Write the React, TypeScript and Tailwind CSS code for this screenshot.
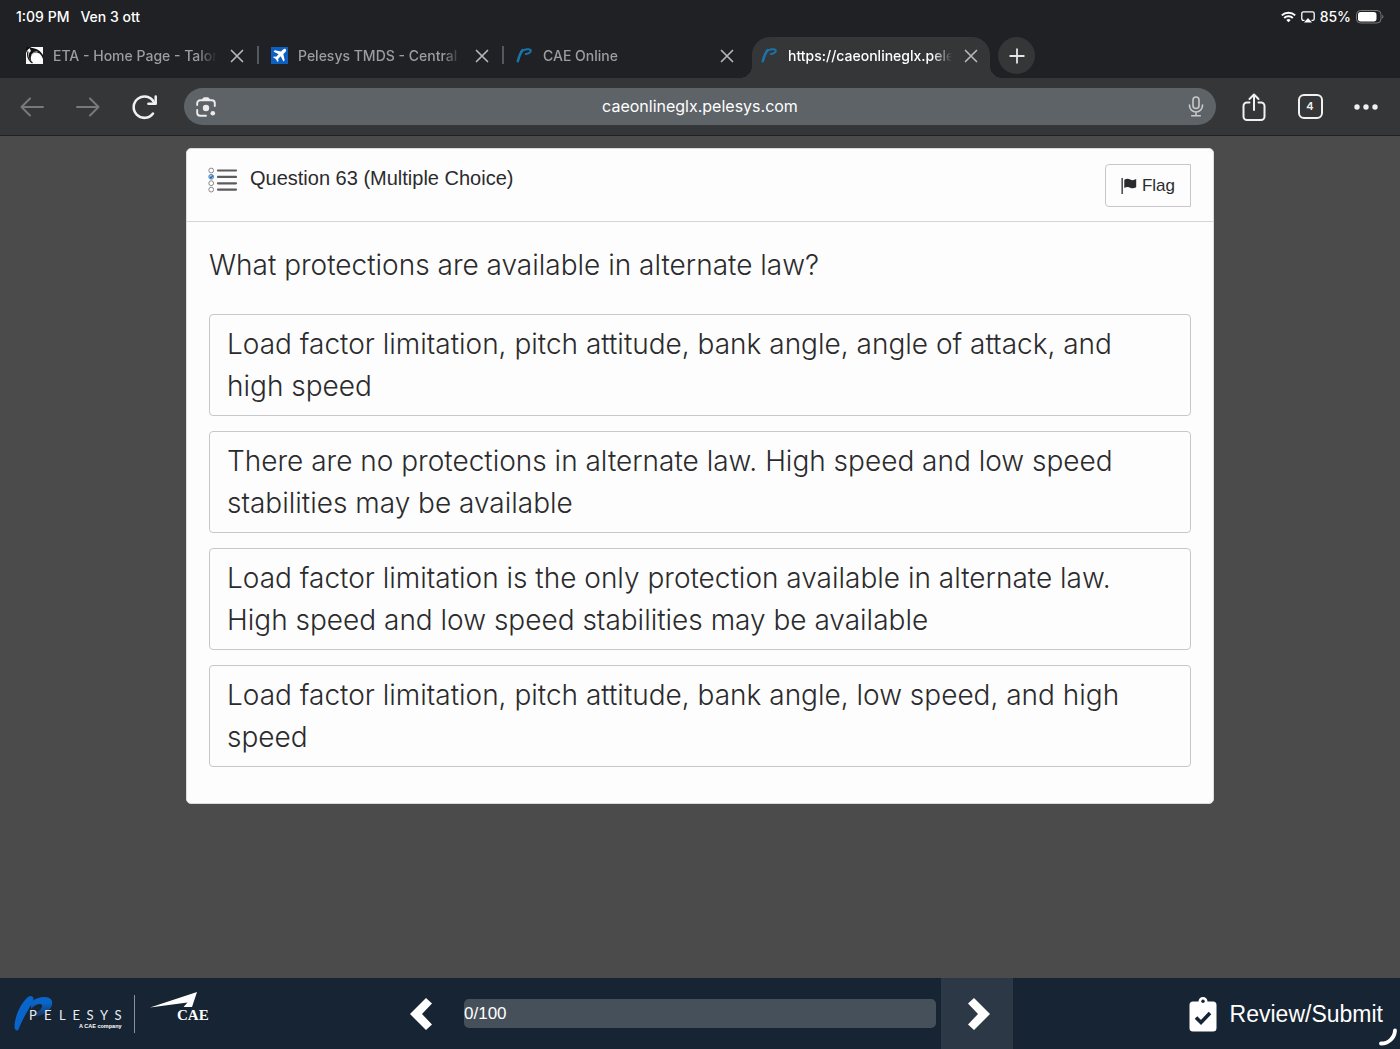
import React from "react";

const answers = [
  "Load factor limitation, pitch attitude, bank angle, angle of attack, and high speed",
  "There are no protections in alternate law. High speed and low speed stabilities may be available",
  "Load factor limitation is the only protection available in alternate law. High speed and low speed stabilities may be available",
  "Load factor limitation, pitch attitude, bank angle, low speed, and high speed",
];

function TalonIcon() {
  return (
    <svg width="17" height="17" viewBox="0 0 17 17" fill="none" aria-hidden="true">
      <rect width="17" height="17" fill="#f7f7f7" />
      <path d="M0 0h6C3 1 1 3 0 6z" fill="#111" />
      <path d="M3.500 1C9 .5 14 3 17 8v4c-1.500-4.500-4-6.500-7-6.500-4 0-6.500 4-4.500 9C2 11 2 6 5 4z" fill="#111" />
      <path d="M2 4.500c-1 4 .5 8.500 4.500 11.500" stroke="#111" strokeWidth="1.200" />
      <path d="M5.500 8C7 5.500 9 4.500 11.500 4.700" stroke="#ddd" strokeWidth=".7" />
      <circle cx="10.400" cy="11.300" r="4" fill="#fff" />
    </svg>
  );
}

function PlaneIcon() {
  return (
    <svg width="17" height="17" viewBox="0 0 17 17" aria-hidden="true">
      <rect width="17" height="17" fill="#0d5fc0" />
      <path
        d="M14.800 2.200c-.8-.8-2-.3-2.700.4L10 4.600 3.800 3.200 2.500 4.500 7.600 7.200 5.100 9.800 2.900 9.400 2 10.300 4.800 12 6.600 15 7.500 14.100 7.100 11.900 9.700 9.300 12.400 14.500 13.700 13.200 12.300 7 14.400 4.900c.7-.7 1.200-1.900.4-2.700z"
        fill="#fff"
      />
    </svg>
  );
}

function PelesysIcon() {
  return (
    <svg width="17" height="17" viewBox="0 0 17 17" fill="none" aria-hidden="true">
      <path d="M6.500 3.200C4.300 6 3 9.500 1.800 14.200" stroke="#1a74aa" strokeWidth="2.600" strokeLinecap="round" />
      <path d="M5 4.800C8 2 14 1.400 14.800 3.200c.5 2-2.300 3.600-5 3.800" stroke="#1a74aa" strokeWidth="2" strokeLinecap="round" />
    </svg>
  );
}

function CloseIcon() {
  return (
    <svg width="14" height="14" viewBox="0 0 14 14" stroke="currentColor" strokeWidth="1.700" strokeLinecap="round" aria-hidden="true">
      <path d="M1.500 1.500l11 11M12.500 1.500l-11 11" />
    </svg>
  );
}

const tabs = [
  { title: "ETA - Home Page - Talon", icon: <TalonIcon />, active: false },
  { title: "Pelesys TMDS - Central", icon: <PlaneIcon />, active: false },
  { title: "CAE Online", icon: <PelesysIcon />, active: false },
  { title: "https://caeonlineglx.pele", icon: <PelesysIcon />, active: true },
];

function Tab({ title, icon, active, divider }: { title: string; icon: React.ReactNode; active: boolean; divider: boolean }) {
  return (
    <div
      className={
        active
          ? "relative mx-1 flex h-[41px] w-[238px] items-start rounded-t-[18px] bg-[#353638] pr-[12px] pl-[9px] text-white"
          : "relative flex h-[41px] w-[245px] items-start pr-[14px] pl-[13px] text-[#9b9da0]"
      }
    >
      {active && (
        <>
          <span className="absolute bottom-0 -left-3 h-3 w-3 bg-[radial-gradient(circle_at_0_0,transparent_12px,#353638_12px)]" />
          <span className="absolute -right-3 bottom-0 h-3 w-3 bg-[radial-gradient(circle_at_100%_0,transparent_12px,#353638_12px)]" />
        </>
      )}
      <button className="flex h-[37px] min-w-0 flex-1 items-center gap-[10px] text-left">
        <span className="shrink-0">{icon}</span>
        <span className="w-[164px] mask-r-from-88% text-[14px] leading-5 font-medium whitespace-nowrap">{title}</span>
      </button>
      <button aria-label={"Close " + title} className="ml-[13px] flex h-[37px] w-[14px] shrink-0 items-center text-[#b4b6b8]">
        <CloseIcon />
      </button>
      {divider && <span className="absolute top-[9px] -right-px h-[18px] w-[2px] bg-[#54595f]" />}
    </div>
  );
}

function ToolButton({ label, children }: { label: string; children: React.ReactNode }) {
  return (
    <button aria-label={label} className="flex h-10 w-[56px] shrink-0 items-center justify-center">
      {children}
    </button>
  );
}

function BrowserChrome() {
  return (
    <header className="font-['Inter',sans-serif]">
      <div className="bg-[#202124]">
        <div className="flex h-[37px] items-start justify-between pt-[7px] pr-[16px] pl-4 text-[14px] leading-5 font-medium text-white">
          <div className="flex gap-[11px]">
            <span>1:09 PM</span>
            <span>Ven 3 ott</span>
          </div>
          <div className="flex items-center gap-[5px]">
            <svg width="15" height="12" viewBox="0 0 15 12" fill="none" stroke="#fff" strokeWidth="2" aria-hidden="true">
              <path d="M.8 4.400a9.500 9.500 0 0 1 13.400 0M3.200 7a6.100 6.100 0 0 1 8.600 0" />
              <path d="M5.300 9a3.200 3.200 0 0 1 4.400 0L7.500 11.300z" fill="#fff" stroke="none" />
            </svg>
            <svg width="14" height="12" viewBox="0 0 14 12" fill="none" aria-hidden="true">
              <path d="M3.500 9.400H2.400A1.600 1.600 0 0 1 .8 7.800V2.400A1.600 1.600 0 0 1 2.400.8h9.200a1.600 1.600 0 0 1 1.600 1.600v5.400a1.600 1.600 0 0 1-1.600 1.600h-1.100" stroke="#fff" strokeWidth="1.300" />
              <path d="M7 7l4 4.600H3z" fill="#fff" />
            </svg>
            <span>85%</span>
            <svg width="28" height="14" viewBox="0 0 28 14" aria-hidden="true">
              <rect x=".5" y=".5" width="24.500" height="12.500" rx="4" fill="none" stroke="#77797b" />
              <rect x="2" y="2" width="18.500" height="9.500" rx="2.700" fill="#fff" />
              <path d="M26.300 4.800c1.500.6 1.500 3.300 0 4z" fill="#77797b" />
            </svg>
          </div>
        </div>
        <nav aria-label="Tabs" className="flex pl-[13px]">
          {tabs.map((tab, i) => (
            <Tab key={i} {...tab} divider={i < 2} />
          ))}
          <button aria-label="New tab" className="ml-1 flex h-[37px] w-[37px] items-center justify-center rounded-full bg-[#353638] text-[#e4e5e6]">
            <svg width="16" height="16" viewBox="0 0 16 16" stroke="currentColor" strokeWidth="1.800" strokeLinecap="round" aria-hidden="true">
              <path d="M8 1.200v13.600M1.200 8h13.600" />
            </svg>
          </button>
        </nav>
      </div>
      <div className="flex h-[58px] items-center border-b border-[#202124] bg-[#353638] pr-[6px] pl-1 text-[#f1f1f1]">
        <ToolButton label="Back">
          <svg width="24" height="20" viewBox="0 0 24 20" fill="none" stroke="#77797b" strokeWidth="2" strokeLinecap="round" strokeLinejoin="round" aria-hidden="true">
            <path d="M23 10H1.500M10 1.500L1.500 10l8.500 8.500" />
          </svg>
        </ToolButton>
        <ToolButton label="Forward">
          <svg width="24" height="20" viewBox="0 0 24 20" fill="none" stroke="#77797b" strokeWidth="2" strokeLinecap="round" strokeLinejoin="round" aria-hidden="true">
            <path d="M1 10h21.500M14 1.500l8.500 8.500-8.500 8.500" />
          </svg>
        </ToolButton>
        <ToolButton label="Reload">
          <svg width="26" height="26" viewBox="0 0 26 26" fill="none" stroke="currentColor" strokeWidth="2.500" strokeLinecap="round" strokeLinejoin="round" aria-hidden="true">
            <path d="M22 19.500A10.700 10.700 0 1 1 23 8.500" />
            <path d="M24.700 2.500v7.300h-7.300" />
          </svg>
        </ToolButton>
        <div className="relative mr-[10px] ml-3 flex h-[37px] min-w-0 flex-1 items-center rounded-full bg-[#5e6367]">
          <button aria-label="Search with camera" className="absolute left-3">
            <svg width="20" height="20" viewBox="0 0 20 20" fill="none" stroke="#ececec" strokeWidth="1.900" strokeLinecap="round" aria-hidden="true">
              <path d="M1.200 8V6.200a3 3 0 0 1 3-3h11.600a3 3 0 0 1 3 3V9M1.200 13v2.800a3 3 0 0 0 3 3H10" />
              <path d="M6.800 2.600L8 1.300h4l1.200 1.300z" fill="#ececec" strokeLinejoin="round" />
              <circle cx="10" cy="11" r="3.200" fill="#ececec" stroke="none" />
              <circle cx="16.800" cy="16.300" r="2.300" fill="#ececec" stroke="none" />
            </svg>
          </button>
          <input
            aria-label="Address"
            defaultValue="caeonlineglx.pelesys.com"
            className="h-full w-full bg-transparent px-12 pb-[2px] text-center text-[16px] text-white outline-none"
          />
          <button aria-label="Voice search" className="absolute right-3">
            <svg width="16" height="21" viewBox="0 0 16 21" fill="none" stroke="#c7c9ca" strokeWidth="1.600" strokeLinecap="round" aria-hidden="true">
              <rect x="5" y="1" width="6" height="11.500" rx="3" />
              <path d="M1.500 9v.5a6.500 6.500 0 0 0 13 0V9M8 16v3.800M3.700 19.800h8.600" />
            </svg>
          </button>
        </div>
        <ToolButton label="Share">
          <svg width="24" height="28" viewBox="0 0 24 28" fill="none" stroke="currentColor" strokeWidth="2" strokeLinecap="round" strokeLinejoin="round" aria-hidden="true">
            <path d="M7.500 9.500H5a3.500 3.500 0 0 0-3.500 3.500v10.500A3.500 3.500 0 0 0 5 27h14a3.500 3.500 0 0 0 3.500-3.500V13A3.500 3.500 0 0 0 19 9.500h-2.500" />
            <path d="M12 17V1.500M7.500 6L12 1.500 16.500 6" />
          </svg>
        </ToolButton>
        <ToolButton label="4 open tabs">
          <span className="flex h-[25px] w-[25px] items-center justify-center rounded-[6px] border-2 border-[#f1f1f1] text-[11px] font-semibold">4</span>
        </ToolButton>
        <ToolButton label="More">
          <svg width="24" height="6" viewBox="0 0 24 6" fill="currentColor" aria-hidden="true">
            <circle cx="3" cy="3" r="2.700" />
            <circle cx="12" cy="3" r="2.700" />
            <circle cx="21" cy="3" r="2.700" />
          </svg>
        </ToolButton>
      </div>
    </header>
  );
}

function ListIcon() {
  return (
    <svg width="30" height="26" viewBox="0 0 30 26" fill="none" aria-hidden="true">
      <g stroke="#8a8a8a" strokeWidth="1">
        <circle cx="3.200" cy="3.500" r="2.400" />
        <circle cx="3.200" cy="9.800" r="2.400" fill="#9cc8f0" stroke="#5b88b8" />
        <circle cx="3.200" cy="16.200" r="2.400" />
        <circle cx="3.200" cy="22.600" r="2.400" />
      </g>
      <path d="M2 9.800l1 1 1.700-2.200" stroke="#1b62b0" strokeWidth="1.200" />
      <path d="M10 3.500h18M10 9.900h18M10 16.300h18M10 22.600h18" stroke="#5c5c5f" strokeWidth="2.200" strokeLinecap="round" />
    </svg>
  );
}

function QuestionCard() {
  return (
    <section className="mx-auto w-full max-w-[1028px] rounded-[5px] border border-[#dcdcdc] bg-[#fdfdfd] text-[#2b2b2d]">
      <div className="flex items-start justify-between border-b border-[#d5d5d7] pt-[15px] pr-[22px] pb-[14px] pl-[21px]">
        <div className="flex items-center gap-3 pt-[2px]">
          <ListIcon />
          <h1 className="pb-[3px] text-[20px] leading-6">Question 63 (Multiple Choice)</h1>
        </div>
        <button className="flex h-[43px] w-[86px] items-center justify-center gap-[5px] rounded-l-[4px] border border-[#c8c8ca] text-[17px]">
          <svg width="16" height="16" viewBox="0 0 16 16" fill="#2b2b2d" aria-hidden="true">
            <rect x=".5" y="0" width="1.300" height="16" />
            <path d="M3.300 1.800C5.500.4 7.300.4 9.200 1.500c2 1 3.800.8 6-.5v8.200c-2.200 1.300-4 1.500-6 .5-1.900-1.100-3.700-1.100-5.900.3z" />
          </svg>
          Flag
        </button>
      </div>
      <div className="px-[22px] pt-[22px] pb-[36px] font-['Inter',sans-serif] text-[28px] leading-[42px] font-light">
        <h2>What protections are available in alternate law?</h2>
        <div className="mt-7 flex flex-col gap-[15px]">
          {answers.map((answer) => (
            <button key={answer} className="rounded-[4px] border border-[#c8c8ca] py-2 pr-10 pl-[17px] text-left">
              {answer}
            </button>
          ))}
        </div>
      </div>
    </section>
  );
}

function PelesysLogo() {
  return (
    <svg width="110" height="38" viewBox="0 0 110 38" role="img" aria-label="Pelesys, a CAE company">
      <defs>
        <linearGradient id="bowl" x1="0" y1="0" x2="0" y2="1">
          <stop offset="0.3" stopColor="#0965ca" />
          <stop offset="1" stopColor="#17345a" />
        </linearGradient>
      </defs>
      <path d="M17 7C24 1 36 0 38 6c1.500 7-6 14-16 15.500l-5-1.500c7-2 12-7 11-10-1.500-2.500-7-.5-11 4z" fill="url(#bowl)" />
      <path d="M14 2c2-2 6-1 5.500 2L17 10C13 17 8 25 4.500 34.500c-1 2-3.500 1-4-2C.5 22 6 9 14 2z" fill="#0965ca" />
      <g fill="#e9edf1" fontFamily="Lato, sans-serif" fontSize="13">
        <text x="15" y="25">P</text>
        <text x="30" y="25">E</text>
        <text x="45" y="25">L</text>
        <text x="58.500" y="25">E</text>
        <text x="72.500" y="25">S</text>
        <text x="86" y="25">Y</text>
        <text x="100.500" y="25">S</text>
      </g>
      <text x="65" y="33" fill="#fff" fontFamily="Liberation Sans, sans-serif" fontSize="5.500" fontWeight="700">A CAE company</text>
    </svg>
  );
}

function CaeLogo() {
  return (
    <svg width="62" height="32" viewBox="0 0 62 32" role="img" aria-label="CAE">
      <path d="M0 15.500L47 0 42 15 33.500 15 37.500 10.500z" fill="#fff" />
      <text x="27" y="28" fill="#fff" fontFamily="Liberation Serif, serif" fontSize="15" fontWeight="700">CAE</text>
    </svg>
  );
}

function Footer() {
  return (
    <footer className="grid h-[71px] grid-cols-[1fr_626px_1fr] bg-[#172433] text-white">
      <div className="flex items-center pl-[14px]">
        <PelesysLogo />
        <span className="ml-[10px] h-[38px] w-px bg-[#8b9199]" />
        <span className="mb-3 ml-[15px]">
          <CaeLogo />
        </span>
      </div>
      <div className="flex items-center gap-[5px]">
        <button aria-label="Previous question" className="flex h-full w-[72px] items-center justify-center pr-[5px]">
          <svg width="22" height="32" viewBox="0 0 22 32" fill="#fff" aria-hidden="true">
            <path d="M16 0l6 5.500L12 16l10 10.500-6 5.500L0 16z" />
          </svg>
        </button>
        <div role="progressbar" aria-valuenow={0} aria-valuemin={0} aria-valuemax={100} aria-label="Progress" className="h-[29px] flex-1 rounded-[5px] bg-[#46505b] text-[17px] leading-[29px]">
          0/100
        </div>
        <button aria-label="Next question" className="flex h-full w-[72px] items-center justify-center bg-[#2d3846] pl-1">
          <svg width="22" height="32" viewBox="0 0 22 32" fill="#fff" aria-hidden="true">
            <path d="M6 0L0 5.500 10 16 0 26.500 6 32l16-16z" />
          </svg>
        </button>
      </div>
      <div className="relative flex items-center justify-end pr-[17px]">
        <button className="flex items-center gap-[13px] text-[23px] leading-8">
          <svg width="28" height="36" viewBox="0 0 28 36" aria-hidden="true">
            <path d="M4 5.500h5.500a4.500 4.500 0 0 1 9 0H24a3.500 3.500 0 0 1 3.500 3.500v23a3.500 3.500 0 0 1-3.500 3.500H4A3.500 3.500 0 0 1 .5 32V9A3.500 3.500 0 0 1 4 5.500z" fill="#fff" />
            <circle cx="14" cy="5.300" r="1.700" fill="#172433" />
            <path d="M7 21.500l5 5 9-9.500" stroke="#172433" strokeWidth="3.600" fill="none" />
          </svg>
          Review/Submit
        </button>
        <svg className="absolute right-[3px] bottom-[3px]" width="18" height="18" viewBox="0 0 18 18" fill="none" aria-hidden="true">
          <path d="M2 15.500C9.500 15.500 15.500 10 16 2.500" stroke="#fff" strokeWidth="3.800" strokeLinecap="round" />
        </svg>
      </div>
    </footer>
  );
}

export default function App() {
  return (
    <div className="flex min-h-screen flex-col bg-[#4b4b4b] font-['Liberation_Sans',Arial,sans-serif]">
      <BrowserChrome />
      <main className="flex-1 pt-3">
        <QuestionCard />
      </main>
      <Footer />
    </div>
  );
}
